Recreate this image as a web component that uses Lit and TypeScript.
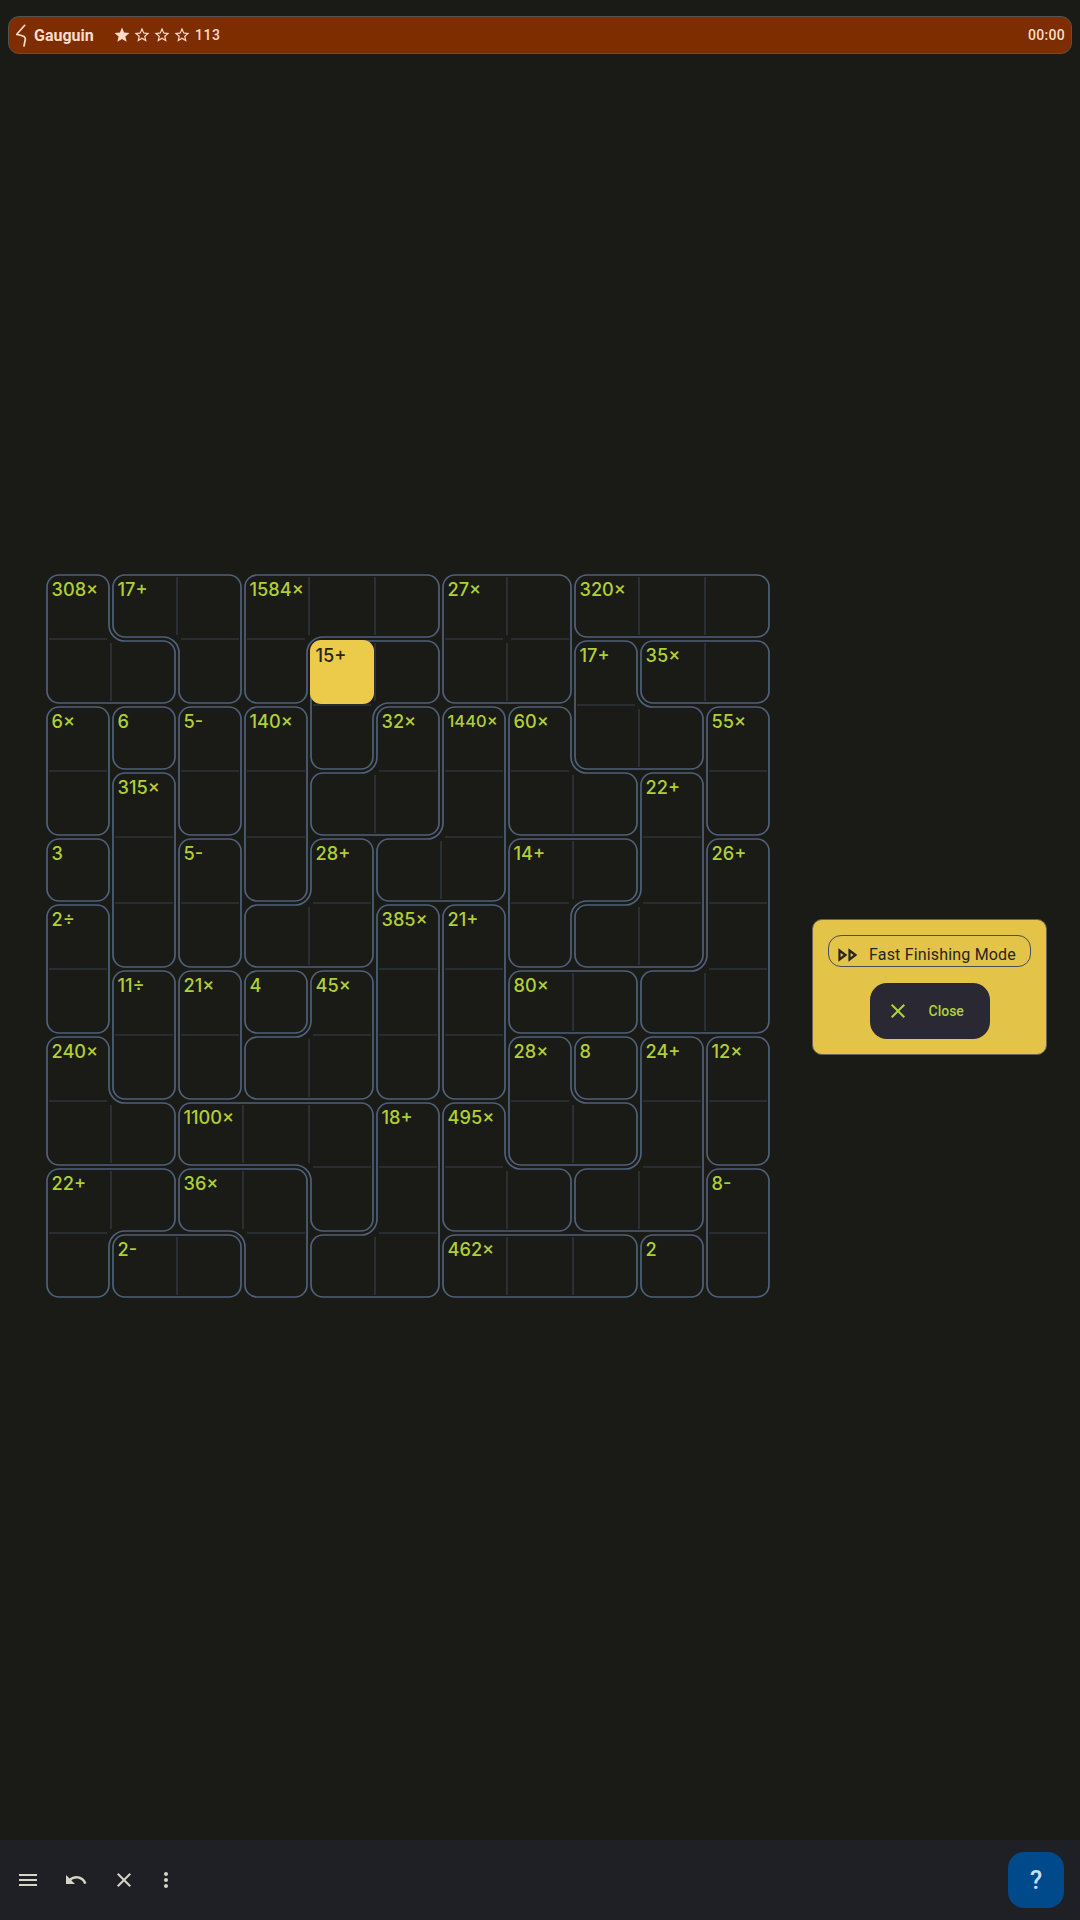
import { LitElement, html, css, svg } from "lit";
import { customElement } from "lit/decorators.js";

const CELL = 66;

interface Cage { label: string; cells: [number, number][]; small?: boolean }

const CAGES: Cage[] = [
  { label: "308×", cells: [[0,0],[1,0],[1,1]] },
  { label: "17+", cells: [[0,1],[0,2],[1,2]] },
  { label: "1584×", cells: [[0,3],[0,4],[0,5],[1,3]] },
  { label: "15+", cells: [[1,4],[1,5],[2,4]] },
  { label: "27×", cells: [[0,6],[0,7],[1,6],[1,7]] },
  { label: "320×", cells: [[0,8],[0,9],[0,10]] },
  { label: "17+", cells: [[1,8],[2,8],[2,9]] },
  { label: "35×", cells: [[1,9],[1,10]] },
  { label: "6×", cells: [[2,0],[3,0]] },
  { label: "6", cells: [[2,1]] },
  { label: "5-", cells: [[2,2],[3,2]] },
  { label: "140×", cells: [[2,3],[3,3],[4,3]] },
  { label: "32×", cells: [[2,5],[3,5],[3,4]] },
  { label: "1440×", cells: [[2,6],[3,6],[4,6],[4,5]], small: true },
  { label: "60×", cells: [[2,7],[3,7],[3,8]] },
  { label: "55×", cells: [[2,10],[3,10]] },
  { label: "315×", cells: [[3,1],[4,1],[5,1]] },
  { label: "22+", cells: [[3,9],[4,9],[5,9],[5,8]] },
  { label: "3", cells: [[4,0]] },
  { label: "5-", cells: [[4,2],[5,2]] },
  { label: "28+", cells: [[4,4],[5,4],[5,3]] },
  { label: "14+", cells: [[4,7],[4,8],[5,7]] },
  { label: "26+", cells: [[4,10],[5,10],[6,10],[6,9]] },
  { label: "2÷", cells: [[5,0],[6,0]] },
  { label: "385×", cells: [[5,5],[6,5],[7,5]] },
  { label: "21+", cells: [[5,6],[6,6],[7,6]] },
  { label: "11÷", cells: [[6,1],[7,1]] },
  { label: "21×", cells: [[6,2],[7,2]] },
  { label: "4", cells: [[6,3]] },
  { label: "45×", cells: [[6,4],[7,4],[7,3]] },
  { label: "80×", cells: [[6,7],[6,8]] },
  { label: "240×", cells: [[7,0],[8,0],[8,1]] },
  { label: "28×", cells: [[7,7],[8,7],[8,8]] },
  { label: "8", cells: [[7,8]] },
  { label: "24+", cells: [[7,9],[8,9],[9,9],[9,8]] },
  { label: "12×", cells: [[7,10],[8,10]] },
  { label: "1100×", cells: [[8,2],[8,3],[8,4],[9,4]] },
  { label: "18+", cells: [[8,5],[9,5],[10,5],[10,4]] },
  { label: "495×", cells: [[8,6],[9,6],[9,7]] },
  { label: "22+", cells: [[9,0],[9,1],[10,0]] },
  { label: "36×", cells: [[9,2],[9,3],[10,3]] },
  { label: "8-", cells: [[9,10],[10,10]] },
  { label: "2-", cells: [[10,1],[10,2]] },
  { label: "462×", cells: [[10,6],[10,7],[10,8]] },
  { label: "2", cells: [[10,9]] },
];

const INSET = 2;
const R_CONVEX = 12;
const R_CONCAVE = 16;

function cagePath(cage: Cage): string {
  const has = (r: number, c: number) => cage.cells.some(([a, b]) => a === r && b === c);
  const edges: [number, number, number, number][] = [];
  for (const [r, c] of cage.cells) {
    if (!has(r - 1, c)) edges.push([c, r, c + 1, r]);
    if (!has(r, c + 1)) edges.push([c + 1, r, c + 1, r + 1]);
    if (!has(r + 1, c)) edges.push([c + 1, r + 1, c, r + 1]);
    if (!has(r, c - 1)) edges.push([c, r + 1, c, r]);
  }
  const loop = [edges[0]];
  while (loop.length < edges.length) {
    const l = loop[loop.length - 1];
    const n = edges.find((e) => e[0] === l[2] && e[1] === l[3]);
    if (!n) break;
    loop.push(n);
  }
  const corners: { x: number; y: number; d1: number[]; d2: number[] }[] = [];
  for (let i = 0; i < loop.length; i++) {
    const a = loop[i];
    const b = loop[(i + 1) % loop.length];
    const d1 = [a[2] - a[0], a[3] - a[1]];
    const d2 = [b[2] - b[0], b[3] - b[1]];
    if (d1[0] === d2[0] && d1[1] === d2[1]) continue;
    const x = a[2] * CELL + INSET * (-d1[1] - d2[1]);
    const y = a[3] * CELL + INSET * (d1[0] + d2[0]);
    corners.push({ x, y, d1, d2 });
  }
  let p = "";
  corners.forEach((k, i) => {
    const convex = k.d1[0] * k.d2[1] - k.d1[1] * k.d2[0] > 0;
    const rad = convex ? R_CONVEX : R_CONCAVE;
    const sx = k.x - k.d1[0] * rad;
    const sy = k.y - k.d1[1] * rad;
    const ex = k.x + k.d2[0] * rad;
    const ey = k.y + k.d2[1] * rad;
    p += `${i === 0 ? "M" : "L"}${sx} ${sy}A${rad} ${rad} 0 0 ${convex ? 1 : 0} ${ex} ${ey}`;
  });
  return p + "Z";
}

function innerLines(cage: Cage): string {
  const has = (r: number, c: number) => cage.cells.some(([a, b]) => a === r && b === c);
  let p = "";
  const m = 4;
  for (const [r, c] of cage.cells) {
    if (has(r, c + 1)) p += `M${(c + 1) * CELL} ${r * CELL + m}V${(r + 1) * CELL - m}`;
    if (has(r + 1, c)) p += `M${c * CELL + m} ${(r + 1) * CELL}H${(c + 1) * CELL - m}`;
  }
  return p;
}

const ICONS = {
  menu: "M3 18h18v-2H3v2zm0-5h18v-2H3v2zm0-7v2h18V6H3z",
  undo: "M12.5 8c-2.65 0-5.05.99-6.9 2.6L2 7v9h9l-3.62-3.62c1.39-1.16 3.16-1.88 5.12-1.88 3.54 0 6.55 2.31 7.6 5.5l2.37-.78C21.08 11.03 17.15 8 12.5 8z",
  close: "M19 6.41L17.59 5 12 10.59 6.41 5 5 6.41 10.59 12 5 17.59 6.41 19 12 13.41 17.59 19 19 17.59 13.41 12z",
  more: "M12 8c1.1 0 2-.9 2-2s-.9-2-2-2-2 .9-2 2 .9 2 2 2zm0 2c-1.1 0-2 .9-2 2s.9 2 2 2 2-.9 2-2-.9-2-2-2zm0 6c-1.1 0-2 .9-2 2s.9 2 2 2 2-.9 2-2-.9-2-2-2z",
  star: "M12 17.27L18.18 21l-1.64-7.03L22 9.24l-7.19-.61L12 2 9.19 8.63 2 9.24l5.46 4.73L5.82 21z",
  starBorder: "M22 9.24l-7.19-.62L12 2 9.19 8.63 2 9.24l5.46 4.73L5.82 21 12 17.27 18.18 21l-1.63-7.03L22 9.24zM12 15.4l-3.76 2.27 1-4.28-3.32-2.88 4.38-.38L12 6.1l1.71 4.04 4.38.38-3.32 2.88 1 4.28L12 15.4z",
};

const icon = (d: string, cls = "ic") => html`<svg class=${cls} viewBox="0 0 24 24"><path d=${d}></path></svg>`;

@customElement("app-root")
export class AppRoot extends LitElement {
  static styles = css`
    :host {
      display: flex;
      flex-direction: column;
      width: 1080px;
      height: 1920px;
      background: #1a1b16;
      font-family: Roboto, sans-serif;
      overflow: hidden;
    }
    .top {
      margin: 16px 8px 0;
      height: 38px;
      box-sizing: border-box;
      background: #7d2d00;
      border: 1px solid #55534f;
      border-radius: 11px;
      display: flex;
      align-items: center;
      padding: 0 6px 0 7px;
      color: #ffdbcc;
    }
    .logo { width: 14px; height: 24px; fill: none; stroke: #ffdbcc; stroke-width: 1.7; stroke-linecap: round; stroke-linejoin: round; }
    .title { font-weight: 700; font-size: 16px; margin-left: 4px; width: 79px; }
    .stars { display: flex; gap: 2px; }
    .star { width: 18px; height: 18px; fill: #ffdbcc; }
    .count { font-size: 14px; margin-left: 4px; letter-spacing: 0.5px; font-weight: 500; }
    .time { margin-left: auto; font-size: 14px; letter-spacing: 0.3px; font-weight: 500; }
    .main {
      flex: 1;
      display: flex;
      align-items: flex-start;
      padding: 519px 33px 0 45px;
      justify-content: space-between;
    }
    .board {
      position: relative;
      width: 726px;
      height: 726px;
      display: grid;
      grid-template-columns: repeat(11, 66px);
      grid-template-rows: repeat(11, 66px);
    }
    .lines { position: absolute; inset: 0; overflow: visible; }
    .cage { fill: none; stroke: #50607a; stroke-width: 1.7; }
    .inner { fill: none; stroke: #2f333b; stroke-width: 1.7; }
    .sel { fill: #eccb4b; }
    .label {
      position: relative;
      padding: 5px 0 0 6.5px;
      font-family: Inter, sans-serif;
      font-weight: 500;
      font-size: 18.2px;
      line-height: 22px;
      color: #b0cf36;
      white-space: nowrap;
    }
    .label.small { font-size: 16.5px; }
    .label.on { color: #26261f; }
    .panel {
      margin-top: 346px;
      width: 235px;
      height: 136px;
      box-sizing: border-box;
      background: #e3c348;
      border: 1px solid #66645a;
      border-radius: 10px;
      padding: 15px 15px 0;
      display: flex;
      flex-direction: column;
      align-items: center;
      gap: 16px;
    }
    .toggle {
      width: 100%;
      height: 32px;
      box-sizing: border-box;
      border: 1px solid #4c4c55;
      border-radius: 13px;
      display: flex;
      align-items: center;
      padding: 6px 0 0 9px;
      color: #26261f;
      font-size: 16px;
      letter-spacing: 0.18px;
      gap: 11px;
    }
    .ff { width: 20px; height: 14px; margin-top: 2px; fill: none; stroke: #26261f; stroke-width: 2.2; stroke-linejoin: miter; }
    .closeb {
      width: 120px;
      height: 56px;
      border-radius: 17px;
      background: #2a2933;
      color: #afd13c;
      display: flex;
      align-items: center;
      padding-left: 16px;
      box-sizing: border-box;
      font-size: 14px;
      font-weight: 500;
      gap: 19px;
    }
    .closeb .ic { width: 24px; height: 24px; fill: #afd13c; }
    .bar {
      height: 80px;
      background: #1f1f26;
      display: flex;
      align-items: center;
      padding: 0 16px;
      gap: 24px;
    }
    .bar .ic { width: 24px; height: 24px; fill: #d5d5c5; flex: none; }
    .bar .ic.more { margin-left: -6px; }
    .help {
      margin-left: auto;
      width: 56px;
      height: 56px;
      background: #004a8c;
      border-radius: 16px;
      display: flex;
      align-items: center;
      justify-content: center;
      color: #c9dff7;
      font-size: 25px;
      font-weight: 500;
    }
  `;

  render() {
    return html`
      <div class="top">
        <svg class="logo" viewBox="0 0 14 24"><path d="M8.7 2.3 L0.8 11.3 Q5 12 8 13.5 Q9.5 14.5 9.3 16.5 L8 23"></path></svg>
        <span class="title">Gauguin</span>
        <span class="stars">
          ${icon(ICONS.star, "star")}${icon(ICONS.starBorder, "star")}${icon(ICONS.starBorder, "star")}${icon(ICONS.starBorder, "star")}
        </span>
        <span class="count">113</span>
        <span class="time">00:00</span>
      </div>
      <div class="main">
        <div class="board">
          <svg class="lines" viewBox="0 0 726 726" width="726" height="726">
            ${CAGES.map((c) => svg`<path class="inner" d=${innerLines(c)}></path>`)}
            ${CAGES.map((c) => svg`<path class="cage" d=${cagePath(c)}></path>`)}
            <rect class="sel" x="265" y="67" width="64" height="64" rx="11"></rect>
          </svg>
          ${CAGES.map((c) => {
            const [r, col] = c.cells[0];
            const on = r === 1 && col === 4;
            return html`<div
              class="label ${c.small ? "small" : ""} ${on ? "on" : ""}"
              style="grid-row:${r + 1};grid-column:${col + 1}"
            >${c.label}</div>`;
          })}
        </div>
        <div class="panel">
          <div class="toggle">
            <svg class="ff" viewBox="0 0 20 14"><path d="M1.5 2.5 L7.5 7 L1.5 11.5 Z M11.5 2.5 L17.5 7 L11.5 11.5 Z"></path></svg>
            <span>Fast Finishing Mode</span>
          </div>
          <div class="closeb">${icon(ICONS.close)}<span>Close</span></div>
        </div>
      </div>
      <div class="bar">
        ${icon(ICONS.menu)}${icon(ICONS.undo)}${icon(ICONS.close)}${icon(ICONS.more, "ic more")}
        <div class="help">?</div>
      </div>
    `;
  }
}
